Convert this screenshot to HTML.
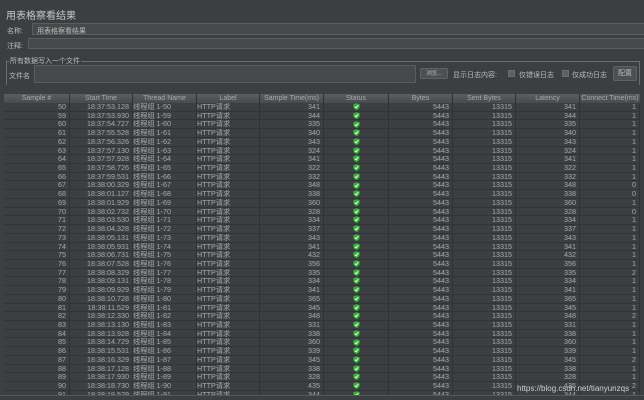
<!DOCTYPE html>
<html><head><meta charset="utf-8"><style>
*{margin:0;padding:0;box-sizing:border-box}
body{width:644px;height:400px;background:#3c3f41;font-family:"Liberation Sans","Noto Sans CJK SC",sans-serif;color:#bbbbbb;position:relative;overflow:hidden;font-size:7.5px}
.a{position:absolute;white-space:nowrap}
.f{position:absolute;background:#45494a;border:1px solid #5a5d5f}
.btn{position:absolute;background:#4c5052;border:1px solid #5e6264;border-radius:2px;text-align:center;font-size:7px;color:#bbb}
.cb{position:absolute;width:7px;height:7px;background:#5c6063;border:1px solid #6a6e70}
#hd{position:absolute;left:4px;top:94px;height:9px;width:636px;display:flex;background:linear-gradient(#5a5e60,#484b4d)}
#hd div{border-right:1px solid #2f3133;text-align:center;font-size:7px;line-height:9px;color:#a8a8a8}
#tb{position:absolute;left:4px;top:103px;width:636px;height:292px;overflow:hidden}
.r{display:flex;height:8.73px;line-height:8.6px;border-bottom:1px solid #323436;font-size:7.2px;color:#a8a8a8}
.r div{border-right:1px solid #2f3133;overflow:hidden;white-space:nowrap}
.n{text-align:right;padding-right:3px}
.c{text-align:center}
.w1{width:66px}.w2{width:63px}.w3{width:64px}.w4{width:63px}.w5{width:64px}.w6{width:65px}.w7{width:64px}.w8{width:63px}.w9{width:64px}.w10{width:60px}
.ic{display:inline-block;width:7px;height:7px;vertical-align:middle;margin-top:-1px}
</style></head><body>
<svg width="0" height="0" style="position:absolute"><defs><g id="sh"><path d="M3.5 0.3 L6.7 1.3 L6.5 4.2 Q5.8 6.2 3.5 6.9 Q1.2 6.2 0.5 4.2 L0.3 1.3 Z" fill="#36b336"/><path d="M1.8 3.6 L3.1 4.9 L5.3 2.2" stroke="#e8ffe8" stroke-width="1" fill="none"/></g></defs></svg>
<div class="a" style="left:6px;top:7px;font-size:10px;color:#c8c8c8">用表格察看结果</div>
<div class="a" style="left:7px;top:26px;font-size:7px">名称:</div>
<div class="f" style="left:32px;top:23px;width:612px;height:12px;border-right:none"></div>
<div class="a" style="left:37px;top:26px;font-size:7px">用表格察看结果</div>
<div class="a" style="left:7px;top:41px;font-size:7px">注释:</div>
<div class="f" style="left:28px;top:38px;width:616px;height:11px;border-right:none"></div>
<div style="position:absolute;left:6px;top:61px;width:634px;height:24px;border:1px solid #6a6d6f;border-bottom:none"></div>
<div class="a" style="left:9px;top:56px;font-size:7px;background:#3c3f41;padding:0 1px">所有数据写入一个文件</div>
<div class="a" style="left:9px;top:71px;font-size:7px">文件名</div>
<div class="f" style="left:34px;top:65px;width:382px;height:18px"></div>
<div class="btn" style="left:420px;top:68px;width:28px;height:11px;line-height:10px;font-size:5.5px">浏览...</div>
<div class="a" style="left:453px;top:70px;font-size:7px">显示日志内容:</div>
<div class="cb" style="left:508px;top:70px"></div>
<div class="a" style="left:519px;top:70px;font-size:7px">仅错误日志</div>
<div class="cb" style="left:562px;top:70px"></div>
<div class="a" style="left:572px;top:70px;font-size:7px">仅成功日志</div>
<div class="btn" style="left:613px;top:66px;width:24px;height:15px;line-height:14px">配置</div>
<div id="hd"><div class="w1">Sample #</div><div class="w2">Start Time</div><div class="w3">Thread Name</div><div class="w4">Label</div><div class="w5">Sample Time(ms)</div><div class="w6">Status</div><div class="w7">Bytes</div><div class="w8">Sent Bytes</div><div class="w9">Latency</div><div class="w10" style="border:none">Connect Time(ms)</div></div>
<div id="tb">
<div class="r"><div class="w1 n">50</div><div class="w2 n">18:37:53.128</div><div class="w3">线程组 1-50</div><div class="w4">HTTP请求</div><div class="w5 n">341</div><div class="w6 c"><svg class="ic"><use href="#sh"/></svg></div><div class="w7 n">5443</div><div class="w8 n">13315</div><div class="w9 n">341</div><div class="w10 n">1</div></div>
<div class="r"><div class="w1 n">59</div><div class="w2 n">18:37:53.930</div><div class="w3">线程组 1-59</div><div class="w4">HTTP请求</div><div class="w5 n">344</div><div class="w6 c"><svg class="ic"><use href="#sh"/></svg></div><div class="w7 n">5443</div><div class="w8 n">13315</div><div class="w9 n">344</div><div class="w10 n">1</div></div>
<div class="r"><div class="w1 n">60</div><div class="w2 n">18:37:54.727</div><div class="w3">线程组 1-60</div><div class="w4">HTTP请求</div><div class="w5 n">335</div><div class="w6 c"><svg class="ic"><use href="#sh"/></svg></div><div class="w7 n">5443</div><div class="w8 n">13315</div><div class="w9 n">335</div><div class="w10 n">1</div></div>
<div class="r"><div class="w1 n">61</div><div class="w2 n">18:37:55.528</div><div class="w3">线程组 1-61</div><div class="w4">HTTP请求</div><div class="w5 n">340</div><div class="w6 c"><svg class="ic"><use href="#sh"/></svg></div><div class="w7 n">5443</div><div class="w8 n">13315</div><div class="w9 n">340</div><div class="w10 n">1</div></div>
<div class="r"><div class="w1 n">62</div><div class="w2 n">18:37:56.326</div><div class="w3">线程组 1-62</div><div class="w4">HTTP请求</div><div class="w5 n">343</div><div class="w6 c"><svg class="ic"><use href="#sh"/></svg></div><div class="w7 n">5443</div><div class="w8 n">13315</div><div class="w9 n">343</div><div class="w10 n">1</div></div>
<div class="r"><div class="w1 n">63</div><div class="w2 n">18:37:57.130</div><div class="w3">线程组 1-63</div><div class="w4">HTTP请求</div><div class="w5 n">324</div><div class="w6 c"><svg class="ic"><use href="#sh"/></svg></div><div class="w7 n">5443</div><div class="w8 n">13315</div><div class="w9 n">324</div><div class="w10 n">1</div></div>
<div class="r"><div class="w1 n">64</div><div class="w2 n">18:37:57.928</div><div class="w3">线程组 1-64</div><div class="w4">HTTP请求</div><div class="w5 n">341</div><div class="w6 c"><svg class="ic"><use href="#sh"/></svg></div><div class="w7 n">5443</div><div class="w8 n">13315</div><div class="w9 n">341</div><div class="w10 n">1</div></div>
<div class="r"><div class="w1 n">65</div><div class="w2 n">18:37:58.726</div><div class="w3">线程组 1-65</div><div class="w4">HTTP请求</div><div class="w5 n">322</div><div class="w6 c"><svg class="ic"><use href="#sh"/></svg></div><div class="w7 n">5443</div><div class="w8 n">13315</div><div class="w9 n">322</div><div class="w10 n">1</div></div>
<div class="r"><div class="w1 n">66</div><div class="w2 n">18:37:59.531</div><div class="w3">线程组 1-66</div><div class="w4">HTTP请求</div><div class="w5 n">332</div><div class="w6 c"><svg class="ic"><use href="#sh"/></svg></div><div class="w7 n">5443</div><div class="w8 n">13315</div><div class="w9 n">332</div><div class="w10 n">1</div></div>
<div class="r"><div class="w1 n">67</div><div class="w2 n">18:38:00.329</div><div class="w3">线程组 1-67</div><div class="w4">HTTP请求</div><div class="w5 n">348</div><div class="w6 c"><svg class="ic"><use href="#sh"/></svg></div><div class="w7 n">5443</div><div class="w8 n">13315</div><div class="w9 n">348</div><div class="w10 n">0</div></div>
<div class="r"><div class="w1 n">68</div><div class="w2 n">18:38:01.127</div><div class="w3">线程组 1-68</div><div class="w4">HTTP请求</div><div class="w5 n">338</div><div class="w6 c"><svg class="ic"><use href="#sh"/></svg></div><div class="w7 n">5443</div><div class="w8 n">13315</div><div class="w9 n">338</div><div class="w10 n">0</div></div>
<div class="r"><div class="w1 n">69</div><div class="w2 n">18:38:01.929</div><div class="w3">线程组 1-69</div><div class="w4">HTTP请求</div><div class="w5 n">360</div><div class="w6 c"><svg class="ic"><use href="#sh"/></svg></div><div class="w7 n">5443</div><div class="w8 n">13315</div><div class="w9 n">360</div><div class="w10 n">1</div></div>
<div class="r"><div class="w1 n">70</div><div class="w2 n">18:38:02.732</div><div class="w3">线程组 1-70</div><div class="w4">HTTP请求</div><div class="w5 n">328</div><div class="w6 c"><svg class="ic"><use href="#sh"/></svg></div><div class="w7 n">5443</div><div class="w8 n">13315</div><div class="w9 n">328</div><div class="w10 n">0</div></div>
<div class="r"><div class="w1 n">71</div><div class="w2 n">18:38:03.530</div><div class="w3">线程组 1-71</div><div class="w4">HTTP请求</div><div class="w5 n">334</div><div class="w6 c"><svg class="ic"><use href="#sh"/></svg></div><div class="w7 n">5443</div><div class="w8 n">13315</div><div class="w9 n">334</div><div class="w10 n">1</div></div>
<div class="r"><div class="w1 n">72</div><div class="w2 n">18:38:04.328</div><div class="w3">线程组 1-72</div><div class="w4">HTTP请求</div><div class="w5 n">337</div><div class="w6 c"><svg class="ic"><use href="#sh"/></svg></div><div class="w7 n">5443</div><div class="w8 n">13315</div><div class="w9 n">337</div><div class="w10 n">1</div></div>
<div class="r"><div class="w1 n">73</div><div class="w2 n">18:38:05.131</div><div class="w3">线程组 1-73</div><div class="w4">HTTP请求</div><div class="w5 n">343</div><div class="w6 c"><svg class="ic"><use href="#sh"/></svg></div><div class="w7 n">5443</div><div class="w8 n">13315</div><div class="w9 n">343</div><div class="w10 n">1</div></div>
<div class="r"><div class="w1 n">74</div><div class="w2 n">18:38:05.931</div><div class="w3">线程组 1-74</div><div class="w4">HTTP请求</div><div class="w5 n">341</div><div class="w6 c"><svg class="ic"><use href="#sh"/></svg></div><div class="w7 n">5443</div><div class="w8 n">13315</div><div class="w9 n">341</div><div class="w10 n">1</div></div>
<div class="r"><div class="w1 n">75</div><div class="w2 n">18:38:06.731</div><div class="w3">线程组 1-75</div><div class="w4">HTTP请求</div><div class="w5 n">432</div><div class="w6 c"><svg class="ic"><use href="#sh"/></svg></div><div class="w7 n">5443</div><div class="w8 n">13315</div><div class="w9 n">432</div><div class="w10 n">1</div></div>
<div class="r"><div class="w1 n">76</div><div class="w2 n">18:38:07.528</div><div class="w3">线程组 1-76</div><div class="w4">HTTP请求</div><div class="w5 n">356</div><div class="w6 c"><svg class="ic"><use href="#sh"/></svg></div><div class="w7 n">5443</div><div class="w8 n">13315</div><div class="w9 n">356</div><div class="w10 n">1</div></div>
<div class="r"><div class="w1 n">77</div><div class="w2 n">18:38:08.329</div><div class="w3">线程组 1-77</div><div class="w4">HTTP请求</div><div class="w5 n">335</div><div class="w6 c"><svg class="ic"><use href="#sh"/></svg></div><div class="w7 n">5443</div><div class="w8 n">13315</div><div class="w9 n">335</div><div class="w10 n">2</div></div>
<div class="r"><div class="w1 n">78</div><div class="w2 n">18:38:09.131</div><div class="w3">线程组 1-78</div><div class="w4">HTTP请求</div><div class="w5 n">334</div><div class="w6 c"><svg class="ic"><use href="#sh"/></svg></div><div class="w7 n">5443</div><div class="w8 n">13315</div><div class="w9 n">334</div><div class="w10 n">1</div></div>
<div class="r"><div class="w1 n">79</div><div class="w2 n">18:38:09.929</div><div class="w3">线程组 1-79</div><div class="w4">HTTP请求</div><div class="w5 n">341</div><div class="w6 c"><svg class="ic"><use href="#sh"/></svg></div><div class="w7 n">5443</div><div class="w8 n">13315</div><div class="w9 n">341</div><div class="w10 n">1</div></div>
<div class="r"><div class="w1 n">80</div><div class="w2 n">18:38:10.728</div><div class="w3">线程组 1-80</div><div class="w4">HTTP请求</div><div class="w5 n">365</div><div class="w6 c"><svg class="ic"><use href="#sh"/></svg></div><div class="w7 n">5443</div><div class="w8 n">13315</div><div class="w9 n">365</div><div class="w10 n">1</div></div>
<div class="r"><div class="w1 n">81</div><div class="w2 n">18:38:11.529</div><div class="w3">线程组 1-81</div><div class="w4">HTTP请求</div><div class="w5 n">345</div><div class="w6 c"><svg class="ic"><use href="#sh"/></svg></div><div class="w7 n">5443</div><div class="w8 n">13315</div><div class="w9 n">345</div><div class="w10 n">1</div></div>
<div class="r"><div class="w1 n">82</div><div class="w2 n">18:38:12.330</div><div class="w3">线程组 1-82</div><div class="w4">HTTP请求</div><div class="w5 n">348</div><div class="w6 c"><svg class="ic"><use href="#sh"/></svg></div><div class="w7 n">5443</div><div class="w8 n">13315</div><div class="w9 n">348</div><div class="w10 n">2</div></div>
<div class="r"><div class="w1 n">83</div><div class="w2 n">18:38:13.130</div><div class="w3">线程组 1-83</div><div class="w4">HTTP请求</div><div class="w5 n">331</div><div class="w6 c"><svg class="ic"><use href="#sh"/></svg></div><div class="w7 n">5443</div><div class="w8 n">13315</div><div class="w9 n">331</div><div class="w10 n">1</div></div>
<div class="r"><div class="w1 n">84</div><div class="w2 n">18:38:13.928</div><div class="w3">线程组 1-84</div><div class="w4">HTTP请求</div><div class="w5 n">338</div><div class="w6 c"><svg class="ic"><use href="#sh"/></svg></div><div class="w7 n">5443</div><div class="w8 n">13315</div><div class="w9 n">338</div><div class="w10 n">1</div></div>
<div class="r"><div class="w1 n">85</div><div class="w2 n">18:38:14.729</div><div class="w3">线程组 1-85</div><div class="w4">HTTP请求</div><div class="w5 n">360</div><div class="w6 c"><svg class="ic"><use href="#sh"/></svg></div><div class="w7 n">5443</div><div class="w8 n">13315</div><div class="w9 n">360</div><div class="w10 n">1</div></div>
<div class="r"><div class="w1 n">86</div><div class="w2 n">18:38:15.531</div><div class="w3">线程组 1-86</div><div class="w4">HTTP请求</div><div class="w5 n">339</div><div class="w6 c"><svg class="ic"><use href="#sh"/></svg></div><div class="w7 n">5443</div><div class="w8 n">13315</div><div class="w9 n">339</div><div class="w10 n">1</div></div>
<div class="r"><div class="w1 n">87</div><div class="w2 n">18:38:16.329</div><div class="w3">线程组 1-87</div><div class="w4">HTTP请求</div><div class="w5 n">345</div><div class="w6 c"><svg class="ic"><use href="#sh"/></svg></div><div class="w7 n">5443</div><div class="w8 n">13315</div><div class="w9 n">345</div><div class="w10 n">2</div></div>
<div class="r"><div class="w1 n">88</div><div class="w2 n">18:38:17.128</div><div class="w3">线程组 1-88</div><div class="w4">HTTP请求</div><div class="w5 n">338</div><div class="w6 c"><svg class="ic"><use href="#sh"/></svg></div><div class="w7 n">5443</div><div class="w8 n">13315</div><div class="w9 n">338</div><div class="w10 n">1</div></div>
<div class="r"><div class="w1 n">89</div><div class="w2 n">18:38:17.930</div><div class="w3">线程组 1-89</div><div class="w4">HTTP请求</div><div class="w5 n">328</div><div class="w6 c"><svg class="ic"><use href="#sh"/></svg></div><div class="w7 n">5443</div><div class="w8 n">13315</div><div class="w9 n">328</div><div class="w10 n">1</div></div>
<div class="r"><div class="w1 n">90</div><div class="w2 n">18:38:18.730</div><div class="w3">线程组 1-90</div><div class="w4">HTTP请求</div><div class="w5 n">435</div><div class="w6 c"><svg class="ic"><use href="#sh"/></svg></div><div class="w7 n">5443</div><div class="w8 n">13315</div><div class="w9 n">435</div><div class="w10 n">2</div></div>
<div class="r"><div class="w1 n">91</div><div class="w2 n">18:38:19.529</div><div class="w3">线程组 1-91</div><div class="w4">HTTP请求</div><div class="w5 n">344</div><div class="w6 c"><svg class="ic"><use href="#sh"/></svg></div><div class="w7 n">5443</div><div class="w8 n">13315</div><div class="w9 n">344</div><div class="w10 n">1</div></div>
</div>
<div style="position:absolute;left:0;top:395px;width:644px;height:1px;background:#55585a"></div>
<div class="a" style="left:517px;top:384px;font-size:8px;color:#d0d0d0">https://blog.csdn.net/tianyunzqs</div>
</body></html>
